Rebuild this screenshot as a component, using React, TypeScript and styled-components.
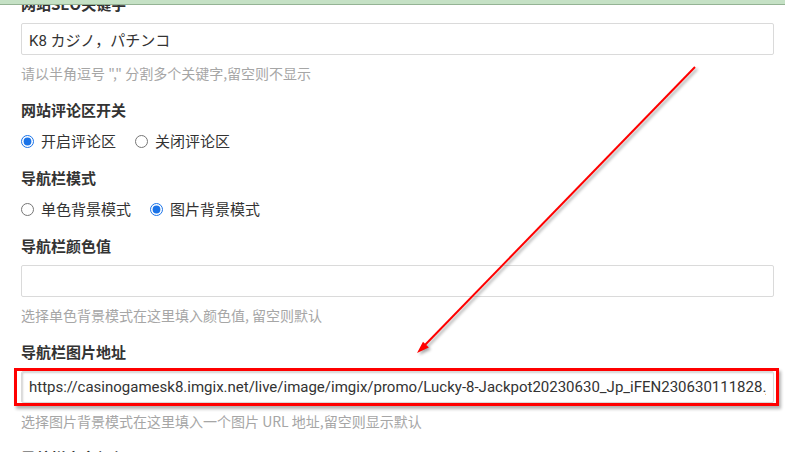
import React from "react";
import styled, { createGlobalStyle } from "styled-components";

const Global = createGlobalStyle`
  html, body { margin: 0; padding: 0; background: #fff; overflow: hidden; }
  body { font-family: Roboto, "Noto Sans CJK SC", sans-serif; color: #333; }
  * { box-sizing: border-box; }
`;

const Page = styled.div`
  position: relative;
  width: 785px;
  height: 452px;
  overflow: hidden;
`;

const TopBar = styled.div`
  position: absolute;
  top: 0;
  left: 0;
  right: 0;
  height: 5px;
  background: #c5e1c5;
  border-bottom: 1px solid #94b394;
  z-index: 3;
`;

const Form = styled.div`
  display: flex;
  flex-direction: column;
  gap: 16px;
  padding: 0 11px 0 21px;
  margin-top: -7px;
`;

const Field = styled.div`
  display: flex;
  flex-direction: column;
`;

const Label = styled.div`
  font-family: "Noto Sans CJK SC", sans-serif;
  font-size: 15px;
  font-weight: 700;
  line-height: 22px;
  height: 22px;
  color: #333;
`;

const InputWrap = styled.div`
  position: relative;
  margin-top: 8px;
`;

const TextInput = styled.input<{ $inset?: boolean }>`
  display: block;
  width: 100%;
  height: 32px;
  border: 1px solid #dadada;
  border-radius: 2px;
  padding: 0 7px;
  font-family: Roboto, "Noto Sans CJK JP", sans-serif;
  font-size: 15px;
  color: #333;
  background: #fff;
  outline: none;
  box-shadow: ${(p) => (p.$inset ? "inset 1px 1px 2px rgba(0,0,0,0.18)" : "none")};
`;

const Highlight = styled.div`
  position: absolute;
  top: -3px;
  bottom: -3px;
  left: -7px;
  right: -5px;
  border: 3px solid #f00;
  box-shadow: 2px 3px 3px rgba(0, 0, 0, 0.3);
  pointer-events: none;
`;

const Help = styled.div`
  margin-top: 8px;
  font-family: "Noto Sans CJK SC", sans-serif;
  font-size: 14px;
  line-height: 20px;
  color: #a6a6a6;
`;

const RadioRow = styled.div`
  display: flex;
  align-items: center;
  gap: 19px;
  margin-top: 10px;
  height: 20px;
`;

const RadioOption = styled.label`
  display: flex;
  align-items: center;
  gap: 7px;
  font-family: "Noto Sans CJK SC", sans-serif;
  font-size: 15px;
  line-height: 20px;
  color: #333;
`;

const Radio = styled.input`
  margin: 0;
  width: 13px;
  height: 13px;
  accent-color: #1a73e8;
`;

const ArrowLayer = styled.svg`
  position: absolute;
  top: 0;
  left: 0;
  width: 785px;
  height: 452px;
  pointer-events: none;
  z-index: 2;
  filter: drop-shadow(2px 2px 1.5px rgba(0, 0, 0, 0.35));
`;

const URL_VALUE =
  "https://casinogamesk8.imgix.net/live/image/imgix/promo/Lucky-8-Jackpot20230630_Jp_iFEN230630111828.jpg";

export default function App() {
  return (
    <Page>
      <Global />
      <TopBar />
      <Form>
        <Field>
          <Label>网站SEO关键字</Label>
          <InputWrap>
            <TextInput readOnly value="K8 カジノ，パチンコ" />
          </InputWrap>
          <Help>请以半角逗号 "," 分割多个关键字,留空则不显示</Help>
        </Field>
        <Field>
          <Label>网站评论区开关</Label>
          <RadioRow>
            <RadioOption>
              <Radio type="radio" name="comment" defaultChecked />
              开启评论区
            </RadioOption>
            <RadioOption>
              <Radio type="radio" name="comment" />
              关闭评论区
            </RadioOption>
          </RadioRow>
        </Field>
        <Field>
          <Label>导航栏模式</Label>
          <RadioRow>
            <RadioOption>
              <Radio type="radio" name="navmode" />
              单色背景模式
            </RadioOption>
            <RadioOption>
              <Radio type="radio" name="navmode" defaultChecked />
              图片背景模式
            </RadioOption>
          </RadioRow>
        </Field>
        <Field>
          <Label>导航栏颜色值</Label>
          <InputWrap>
            <TextInput readOnly value="" />
          </InputWrap>
          <Help>选择单色背景模式在这里填入颜色值, 留空则默认</Help>
        </Field>
        <Field>
          <Label>导航栏图片地址</Label>
          <InputWrap>
            <TextInput $inset readOnly value={URL_VALUE} />
            <Highlight />
          </InputWrap>
          <Help>选择图片背景模式在这里填入一个图片 URL 地址,留空则显示默认</Help>
        </Field>
        <Field>
          <Label>导航栏文字颜色</Label>
        </Field>
      </Form>
      <ArrowLayer viewBox="0 0 785 452">
        <line x1="695" y1="67" x2="424" y2="346" stroke="#f00" strokeWidth="2" />
        <polygon points="417,353 428.8,347.6 423,341.8" fill="#f00" />
      </ArrowLayer>
    </Page>
  );
}
